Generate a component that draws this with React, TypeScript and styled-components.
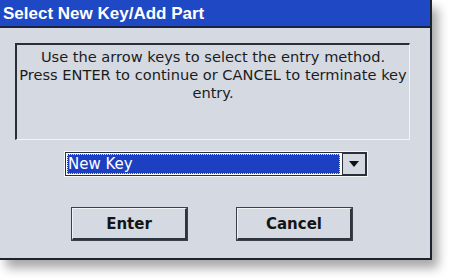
import React from 'react'
import styled, { createGlobalStyle } from 'styled-components'

const GlobalStyle = createGlobalStyle`
  html, body {
    margin: 0;
    padding: 0;
    background: #ffffff;
  }
  body {
    width: 449px;
    height: 278px;
    overflow: hidden;
    font-family: "DejaVu Sans", "Liberation Sans", sans-serif;
  }
`

function App() {
  return (
    <>
      <GlobalStyle />
      <Page>
        <Screen>
          <TitleBar>Select New Key/Add Part</TitleBar>

          <Body>
            <MessageBox>
              Use the arrow keys to select the entry method.
              <br />
              Press ENTER to continue or CANCEL to terminate key
              <br />
              entry.
            </MessageBox>

            <Combo>
              <ComboValue>New Key</ComboValue>
              <ComboButton>
                <svg width="10" height="6" viewBox="0 0 10 6">
                  <polygon points="0,0 10,0 5,6" fill="#111" />
                </svg>
              </ComboButton>
            </Combo>

            <ButtonRow>
              <DialogButton>Enter</DialogButton>
              <DialogButton>Cancel</DialogButton>
            </ButtonRow>
          </Body>
        </Screen>
      </Page>
    </>
  )
}

export default App

const Page = styled.div`
  width: 449px;
  height: 278px;
  background: #ffffff;
`

const Screen = styled.div`
  width: 430px;
  height: 258px;
  background: #d5d9e1;
  border-right: 2px solid #1c2230;
  border-bottom: 2px solid #1c2230;
  box-shadow: 6px 8px 10px rgba(0, 0, 0, 0.35);
  display: flex;
  flex-direction: column;
`

const TitleBar = styled.div`
  height: 26px;
  background: #1f48c4;
  border-bottom: 2px solid #1a2340;
  color: #ffffff;
  font-family: "Liberation Sans", "DejaVu Sans", sans-serif;
  font-weight: bold;
  font-size: 17px;
  line-height: 27px;
  padding-left: 3px;
`

const Body = styled.div`
  display: flex;
  flex-direction: column;
  align-items: flex-start;
  padding: 15px 0 0 15px;
`

const MessageBox = styled.div`
  box-sizing: border-box;
  width: 395px;
  height: 97px;
  border-top: 2px solid #2a2f38;
  border-left: 2px solid #2a2f38;
  border-right: 1px solid #f2f4f7;
  border-bottom: 1px solid #f2f4f7;
  color: #1c1c1c;
  font-size: 14.6px;
  line-height: 18px;
  text-align: center;
  padding-top: 3px;
`

const Combo = styled.div`
  box-sizing: border-box;
  display: flex;
  align-items: stretch;
  width: 304px;
  height: 26px;
  margin: 11px 0 0 49px;
  border: 1px solid #f4f6f8;
  background: #ffffff;
  padding: 1px;
  outline: 1px solid #2b2f36;
  outline-offset: -2px;
`

const ComboValue = styled.div`
  flex: 1;
  margin: 1px 2px 1px 1px;
  background: #1d3fc2;
  outline: 1px dotted #f0e0a0;
  outline-offset: -1px;
  color: #ffffff;
  font-size: 15px;
  line-height: 20px;
  padding-left: 1px;
`

const ComboButton = styled.div`
  width: 22px;
  display: flex;
  align-items: center;
  justify-content: center;
  background: #d5d9e1;
  border: 1px solid #2b2f36;
`

const ButtonRow = styled.div`
  display: flex;
  gap: 50px;
  margin: 31px 0 0 57px;
`

const DialogButton = styled.div`
  box-sizing: border-box;
  width: 115px;
  height: 32px;
  display: flex;
  align-items: center;
  justify-content: center;
  background: #d5d9e1;
  border: 1px solid #f1f3f6;
  border-right: 2px solid #2f3540;
  border-bottom: 2px solid #2f3540;
  outline: 1px solid #3a404b;
  color: #141414;
  font-weight: bold;
  font-size: 15px;
`
